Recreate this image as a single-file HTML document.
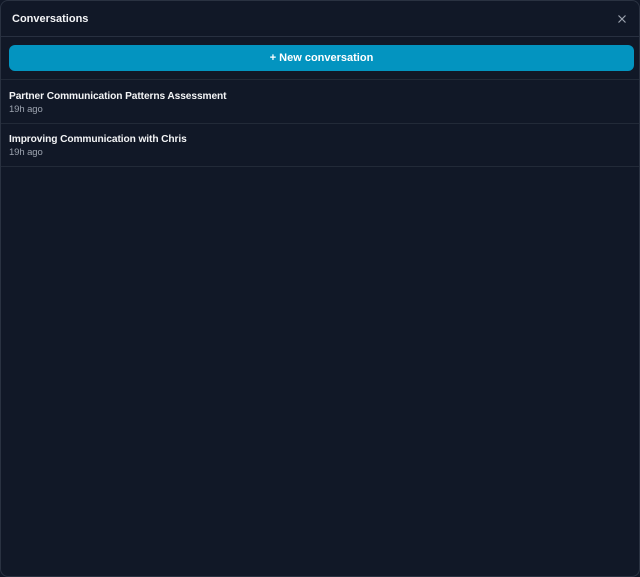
<!DOCTYPE html>
<html><head><style>
html,body{margin:0;padding:0;background:#111827;width:640px;height:570px;overflow:hidden;font-family:"Liberation Sans",sans-serif;}
.wrap{position:absolute;left:0;top:0;width:638px;height:575px;border:1px solid #2a3241;border-radius:8px;background:#111827;}
.hdr{height:35px;border-bottom:1px solid #283040;position:relative;}
.hdr .t{position:absolute;left:11px;top:12px;font-size:11px;font-weight:bold;color:#f3f4f6;}
.x{position:absolute;left:616px;top:13px;}
.btn{position:absolute;left:8px;top:44px;width:625px;height:26px;background:#0394c0;border-radius:6px;color:#fff;font-size:11px;font-weight:bold;text-align:center;line-height:27px;}
.sep{position:absolute;left:0;width:638px;height:1px;background:#222a38;}
.it{position:absolute;left:8px;color:#f3f4f6;font-size:10.2px;font-weight:bold;letter-spacing:-0.1px;}
.it .s{color:#9ca3af;font-size:9.5px;margin-top:2px;font-weight:normal;}
</style></head><body>
<div class="wrap">
<div class="hdr"><div class="t">Conversations</div>
<svg class="x" width="10" height="10" viewBox="0 0 10 10"><path d="M1.5 1.5L8.5 8.5M8.5 1.5L1.5 8.5" stroke="#9ca3af" stroke-width="1.2"/></svg></div>
<div class="btn">+ New conversation</div>
<div class="sep" style="top:78px"></div>
<div class="it" style="top:90px">Partner Communication Patterns Assessment<div class="s">19h ago</div></div>
<div class="sep" style="top:122px"></div>
<div class="it" style="top:133px">Improving Communication with Chris<div class="s">19h ago</div></div>
<div class="sep" style="top:165px"></div>
</div>
</body></html>
